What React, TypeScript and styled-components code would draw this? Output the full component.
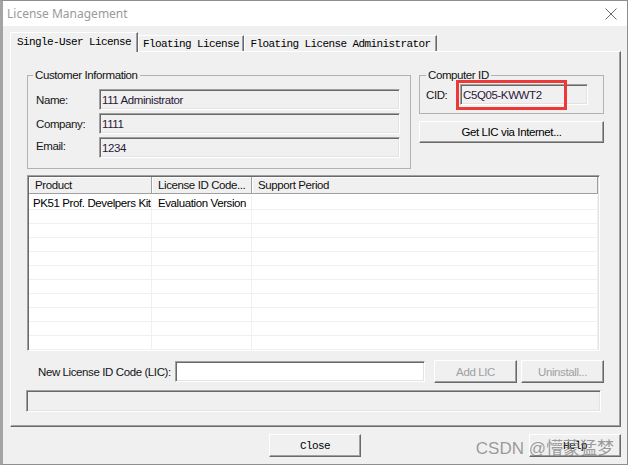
import React from "react";
import styled, { createGlobalStyle } from "styled-components";

const sans = `"Liberation Sans", Arial, sans-serif`;
const mono = `"Liberation Mono", "Courier New", monospace`;
const uiSize = "11.5px";
const uiSpacing = "-0.4px";

const Global = createGlobalStyle`
  html, body { margin: 0; padding: 0; background: #ffffff; }
  body { font-family: ${sans}; }
  *, *::before, *::after { box-sizing: border-box; }
`;

const Window = styled.div`
  position: relative;
  width: 628px;
  height: 465px;
  border: 1px solid #8e8e8e;
  border-left: 3px solid #a4a4a4;
  background: #f0f0f0;
  display: flex;
  flex-direction: column;
`;

const TitleBar = styled.div`
  height: 25px;
  flex: none;
  background: #ffffff;
  display: flex;
  align-items: center;
  justify-content: space-between;
  padding: 0 10px 0 4px;
`;

const Title = styled.span`
  font-family: "Noto Sans", "Open Sans", sans-serif;
  font-size: 12px;
  color: #9a9a9a;
  line-height: 16px;
`;

const Body = styled.div`
  flex: 1;
  display: flex;
  flex-direction: column;
  padding: 6px 6px 0 7px;
`;

const TabStrip = styled.div`
  height: 19px;
  display: flex;
  align-items: flex-end;
`;

const Tab = styled.div<{ $active?: boolean; $w: number }>`
  position: relative;
  z-index: ${(p) => (p.$active ? 2 : 1)};
  width: ${(p) => p.$w}px;
  height: ${(p) => (p.$active ? 20 : 16)}px;
  margin-bottom: ${(p) => (p.$active ? -1 : 0)}px;
  background: #f0f0f0;
  border-top: 1px solid #ffffff;
  border-left: 1px solid #ffffff;
  border-right: 1px solid #696969;
  box-shadow: inset -1px 0 #a0a0a0;
  display: flex;
  align-items: center;
  justify-content: center;
  padding-bottom: ${(p) => (p.$active ? 1 : 0)}px;
  font-family: ${mono};
  font-size: 11px;
  letter-spacing: -0.6px;
  color: #000;
  white-space: nowrap;
`;

const Panel = styled.div`
  width: 611px;
  height: 376px;
  border-top: 1px solid #ffffff;
  border-left: 1px solid #ffffff;
  border-right: 1px solid #696969;
  border-bottom: 1px solid #696969;
  box-shadow: inset -1px -1px #a0a0a0;
  padding: 17px 16px 0 16px;
  display: flex;
  flex-direction: column;
`;

const TopSection = styled.div`
  display: flex;
  align-items: flex-start;
  gap: 8px;
`;

const Group = styled.fieldset<{ $w: number; $h: number; $pad: string }>`
  margin: 0;
  width: ${(p) => p.$w}px;
  height: ${(p) => p.$h}px;
  border: 1px solid #b2b2b2;
  padding: ${(p) => p.$pad};
  min-width: 0;
`;

const Legend = styled.legend<{ $shift: number }>`
  font-family: ${sans};
  font-size: ${uiSize};
  letter-spacing: ${uiSpacing};
  line-height: 12px;
  padding: 0 2px;
  margin-left: ${(p) => p.$shift}px;
  color: #111;
`;

const FieldStack = styled.div`
  display: flex;
  flex-direction: column;
  gap: 3px;
`;

const FieldRow = styled.div`
  display: flex;
  align-items: center;
  height: 21px;
`;

const Label = styled.span<{ $w: number; $raise?: number }>`
  width: ${(p) => p.$w}px;
  flex: none;
  font-size: ${uiSize};
  letter-spacing: ${uiSpacing};
  color: #151515;
  position: relative;
  top: ${(p) => -(p.$raise || 0)}px;
  white-space: nowrap;
`;

const Field = styled.div<{ $w: number; $white?: boolean }>`
  position: relative;
  width: ${(p) => p.$w}px;
  height: 21px;
  flex: none;
  background: ${(p) => (p.$white ? "#ffffff" : "#f0f0f0")};
  border-top: 1px solid #a0a0a0;
  border-left: 1px solid #a0a0a0;
  border-bottom: 1px solid #ffffff;
  border-right: 1px solid #ffffff;
  box-shadow: inset 1px 1px #696969, inset -1px -1px #e3e3e3;
  display: flex;
  align-items: center;
  padding-left: 2px;
  font-size: ${uiSize};
  letter-spacing: ${uiSpacing};
  color: #2a1838;
  white-space: nowrap;
`;

const Highlight = styled.div`
  position: absolute;
  left: -5px;
  top: -5px;
  width: 111px;
  height: 30px;
  border: 3px solid #ee3838;
  pointer-events: none;
`;

const RightColumn = styled.div`
  width: 185px;
  display: flex;
  flex-direction: column;
  gap: 7px;
`;

const Button = styled.button<{ $w: number; $h?: number; $mono?: boolean; $disabled?: boolean }>`
  width: ${(p) => p.$w}px;
  height: ${(p) => p.$h ?? 23}px;
  flex: none;
  margin: 0;
  padding: 0;
  background: #f0f0f0;
  border-top: 1px solid #ffffff;
  border-left: 1px solid #ffffff;
  border-right: 1px solid #696969;
  border-bottom: 1px solid #696969;
  box-shadow: inset -1px -1px #a0a0a0;
  font-family: ${(p) => (p.$mono ? mono : sans)};
  font-size: ${(p) => (p.$mono ? "11px" : uiSize)};
  letter-spacing: ${(p) => (p.$mono ? "-0.6px" : uiSpacing)};
  color: ${(p) => (p.$disabled ? "#a0a0a0" : "#000")};
  display: flex;
  align-items: center;
  justify-content: center;
  white-space: nowrap;
  cursor: default;
`;

const List = styled.div`
  margin-top: 6px;
  width: 573px;
  height: 176px;
  flex: none;
  background: #ffffff;
  border-top: 1px solid #a0a0a0;
  border-left: 1px solid #a0a0a0;
  border-bottom: 1px solid #ffffff;
  border-right: 1px solid #ffffff;
  box-shadow: inset 1px 1px #696969, inset -1px -1px #e3e3e3;
  padding: 1px;
  overflow: hidden;
  display: flex;
  flex-direction: column;
`;

const HeaderRow = styled.div`
  display: flex;
  height: 17px;
  flex: none;
`;

const HeaderCell = styled.div<{ $w?: number }>`
  ${(p) => (p.$w ? `width: ${p.$w}px; flex: none;` : "flex: 1;")}
  height: 17px;
  background: #f0f0f0;
  border-right: 1px solid #a0a0a0;
  border-bottom: 1px solid #a0a0a0;
  box-shadow: inset 1px 1px #ffffff;
  padding-left: 6px;
  display: flex;
  align-items: center;
  font-size: ${uiSize};
  letter-spacing: ${uiSpacing};
  color: #111;
  white-space: nowrap;
  overflow: hidden;
`;

const Rows = styled.div`
  padding-top: 2px;
  display: flex;
  flex-direction: column;
`;

const Row = styled.div`
  display: flex;
  height: 14px;
  flex: none;
`;

const Cell = styled.div<{ $w?: number; $pad: number }>`
  ${(p) => (p.$w ? `width: ${p.$w}px; flex: none;` : "flex: 1;")}
  height: 14px;
  border-right: 1px solid #f0f0f0;
  border-bottom: 1px solid #f0f0f0;
  padding-left: ${(p) => p.$pad}px;
  display: flex;
  align-items: center;
  font-size: ${uiSize};
  letter-spacing: ${uiSpacing};
  color: #000;
  white-space: nowrap;
  overflow: hidden;
`;

const LicRow = styled.div`
  margin-top: 9px;
  height: 23px;
  display: flex;
  align-items: center;
`;

const LicLabel = styled.span`
  margin-left: 11px;
  width: 137px;
  flex: none;
  font-size: ${uiSize};
  letter-spacing: ${uiSpacing};
  color: #151515;
  white-space: nowrap;
`;

const Status = styled.div`
  margin-top: 7px;
  margin-left: -1px;
  width: 575px;
  height: 22px;
  background: #f0f0f0;
  border-top: 1px solid #a0a0a0;
  border-left: 1px solid #a0a0a0;
  border-bottom: 1px solid #ffffff;
  border-right: 1px solid #ffffff;
  box-shadow: inset 1px 1px #696969, inset -1px -1px #e3e3e3;
`;

const Footer = styled.div`
  margin-top: 7px;
  width: 611px;
  display: flex;
  align-items: center;
`;

const Spacer = styled.div<{ $w?: number }>`
  ${(p) => (p.$w ? `width: ${p.$w}px; flex: none;` : "flex: 1;")}
`;

const Watermark = styled.div`
  position: absolute;
  right: 13px;
  bottom: 5px;
  font-family: "Liberation Sans", "Noto Sans CJK SC", sans-serif;
  font-size: 17px;
  line-height: 20px;
  color: rgba(115, 115, 115, 0.7);
  white-space: nowrap;
  pointer-events: none;
`;

const CloseIcon = () => (
  <svg width="12" height="12" viewBox="0 0 12 12" aria-hidden="true">
    <path d="M0.5 0.5 L11.5 11.5 M11.5 0.5 L0.5 11.5" stroke="#6a6a6a" strokeWidth="1" fill="none" />
  </svg>
);

const rows = [
  ["PK51 Prof. Develpers Kit", "Evaluation Version", ""],
  ...Array.from({ length: 10 }, () => ["", "", ""]),
];

export default function App() {
  return (
    <>
      <Global />
      <Window>
        <TitleBar>
          <Title>License Management</Title>
          <CloseIcon />
        </TitleBar>
        <Body>
          <TabStrip>
            <Tab $active $w={128}>Single-User License</Tab>
            <Tab $w={106}>Floating License</Tab>
            <Tab $w={193}>Floating License Administrator</Tab>
          </TabStrip>
          <Panel>
            <TopSection>
              <Group $w={385} $h={100} $pad="8px 10px 0 8px">
                <Legend $shift={-3}>Customer Information</Legend>
                <FieldStack>
                  <FieldRow>
                    <Label $w={63}>Name:</Label>
                    <Field $w={301}>111 Administrator</Field>
                  </FieldRow>
                  <FieldRow>
                    <Label $w={63}>Company:</Label>
                    <Field $w={301}>1111</Field>
                  </FieldRow>
                  <FieldRow>
                    <Label $w={63} $raise={2}>Email:</Label>
                    <Field $w={301}>1234</Field>
                  </FieldRow>
                </FieldStack>
              </Group>
              <RightColumn>
                <Group $w={185} $h={45} $pad="3px 15px 0 6px">
                  <Legend $shift={0}>Computer ID</Legend>
                  <FieldRow>
                    <Label $w={34}>CID:</Label>
                    <Field $w={128}>
                      C5Q05-KWWT2
                      <Highlight />
                    </Field>
                  </FieldRow>
                </Group>
                <Button $w={185} $h={22}>Get LIC via Internet...</Button>
              </RightColumn>
            </TopSection>
            <List>
              <HeaderRow>
                <HeaderCell $w={123}>Product</HeaderCell>
                <HeaderCell $w={100}>License ID Code...</HeaderCell>
                <HeaderCell>Support Period</HeaderCell>
              </HeaderRow>
              <Rows>
                {rows.map((r, i) => (
                  <Row key={i}>
                    <Cell $w={123} $pad={4}>{r[0]}</Cell>
                    <Cell $w={100} $pad={6}>{r[1]}</Cell>
                    <Cell $pad={6}>{r[2]}</Cell>
                  </Row>
                ))}
              </Rows>
            </List>
            <LicRow>
              <LicLabel>New License ID Code (LIC):</LicLabel>
              <Field $w={250} $white />
              <Spacer $w={9} />
              <Button $w={83} $disabled>Add LIC</Button>
              <Spacer $w={4} />
              <Button $w={83} $disabled>Uninstall...</Button>
            </LicRow>
            <Status />
          </Panel>
          <Footer>
            <Spacer $w={259} />
            <Button $w={92} $mono>Close</Button>
            <Spacer />
            <Button $w={92} $mono>Help</Button>
          </Footer>
        </Body>
        <Watermark>CSDN @懵蒙猛梦</Watermark>
      </Window>
    </>
  );
}
